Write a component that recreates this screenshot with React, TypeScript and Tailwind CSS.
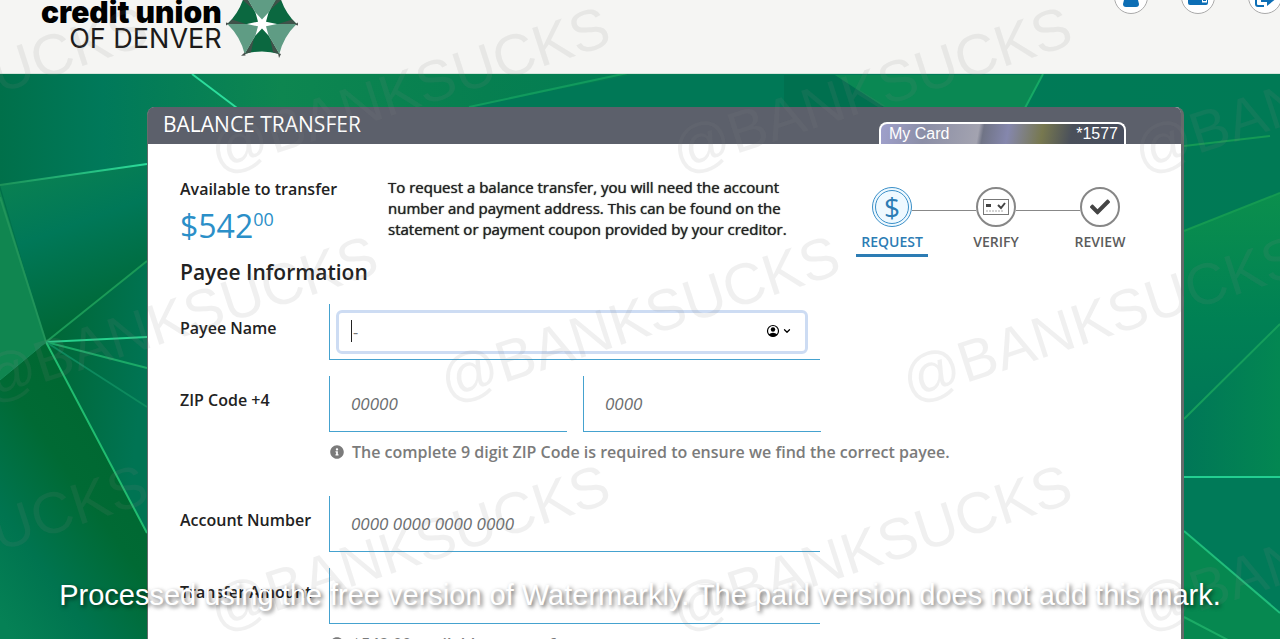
import type { ReactNode } from 'react';
import { ChevronDown } from 'lucide-react';
import { FaCheck, FaInfoCircle } from 'react-icons/fa';

const FIELD = 'h-14 w-full border-b border-l border-[#45a2cf] bg-transparent px-[21px] text-[17px] text-[#333] outline-none placeholder:italic placeholder:text-[#6b6e70]';

const TILE_ROWS = [
  { id: 'top', className: '-ml-[284px]', tiles: 4 },
  { id: 'middle', className: '-ml-[54px]', tiles: 3 },
  { id: 'bottom', className: '-ml-[284px]', tiles: 4 },
];

function Backdrop() {
  return (
    <svg className="absolute inset-0 h-full w-full" viewBox="0 0 1280 639" preserveAspectRatio="xMidYMid slice" aria-hidden="true">
      <defs>
        <linearGradient id="top" x1="0" x2="1">
          <stop offset="0" stopColor="#00704a" />
          <stop offset=".08" stopColor="#00795a" />
          <stop offset=".22" stopColor="#0d8650" />
          <stop offset=".38" stopColor="#067f50" />
          <stop offset=".6" stopColor="#007a58" />
          <stop offset="1" stopColor="#007a55" />
        </linearGradient>
        <linearGradient id="wedge" x1="0" y1="0" x2=".3" y2="1">
          <stop offset="0" stopColor="#0c8350" />
          <stop offset=".45" stopColor="#007858" />
          <stop offset="1" stopColor="#006735" />
        </linearGradient>
        <linearGradient id="fan" x1="0" x2="1" y1="0" y2=".3">
          <stop offset="0" stopColor="#006532" />
          <stop offset="1" stopColor="#007453" />
        </linearGradient>
        <linearGradient id="low" x1=".8" y1="0" x2=".1" y2="1">
          <stop offset="0" stopColor="#00652f" />
          <stop offset=".45" stopColor="#006a34" />
          <stop offset=".75" stopColor="#00744f" />
          <stop offset="1" stopColor="#058155" />
        </linearGradient>
        <linearGradient id="right" x1="0" y1="0" x2="0" y2="1">
          <stop offset="0" stopColor="#0b8f4d" />
          <stop offset=".55" stopColor="#008154" />
          <stop offset="1" stopColor="#007657" />
        </linearGradient>
        <linearGradient id="rightLow" x1="0" y1="0" x2="1" y2="0">
          <stop offset="0" stopColor="#007657" />
          <stop offset="1" stopColor="#038752" />
        </linearGradient>
        <linearGradient id="ray" x1="0" x2="1">
          <stop offset="0" stopColor="#1c9158" />
          <stop offset="1" stopColor="#2cdd9c" />
        </linearGradient>
      </defs>
      <rect width="1280" height="639" fill="url(#top)" />
      <path d="M0 185 147 164V261L46 342Z" fill="url(#wedge)" />
      <path d="M0 190 46 342 0 380Z" fill="#108650" />
      <path d="M46 342 147 260V533Z" fill="url(#fan)" />
      <path d="M0 380 46 342 147 533V639H0Z" fill="url(#low)" />
      <path d="M469 107 632 75H784V107Z" fill="#007856" />
      <path d="M784 75H835L884 107H784Z" fill="#00704f" />
      <path d="M835 75H1043L1025 107H884Z" fill="#0a8853" />
      <path d="M1180 233 1280 193V324L1180 422Z" fill="url(#right)" />
      <path d="M1180 422 1280 324V477H1180Z" fill="url(#rightLow)" />
      <path d="M1180 477H1280V613L1180 528Z" fill="#007a58" />
      <path d="M1180 528 1280 613V639H1180Z" fill="#068850" />
      <g fill="none" strokeWidth="2">
        <path d="M0 185 147 164" stroke="url(#ray)" />
        <path d="M0 197 46 342" stroke="#21945a" />
        <path d="M46 342 147 261" stroke="#1a9a57" />
        <path d="M46 342 147 337" stroke="#27d18d" />
        <path d="M46 342 147 368" stroke="#1aa967" />
        <path d="M46 342 147 407" stroke="#0d8a5e" />
        <path d="M46 342 147 533" stroke="#20bd70" />
        <path d="M46 342 0 380" stroke="#188b59" strokeWidth="1" />
        <path d="M192 74 237 108" stroke="#2cdd9c" />
        <path d="M469 107 632 72" stroke="#119a5d" />
        <path d="M1043 74 1025 108" stroke="#16a965" />
        <path d="M1184 146 1270 136" stroke="#149a55" />
        <path d="M1184 231 1280 193" stroke="#149a52" />
        <path d="M1184 419 1280 324" stroke="#159e5c" />
        <path d="M1184 477H1280" stroke="#23cf91" />
        <path d="M1184 531 1280 613" stroke="#20bd7b" />
        <path d="M1184 617 1228 640" stroke="#1cab66" />
      </g>
    </svg>
  );
}

function Umbrella() {
  return (
    <svg className="h-[72px] w-[72px]" viewBox="-36 -36 72 72" aria-hidden="true">
      {[0, 60, 120, 180, 240, 300].map((deg, i) => (
        <g key={deg} transform={`rotate(${deg})`}>
          <path d="M0 0 17.300 30Q0 25-17.300 30Z" fill={i % 2 === 0 ? '#0b6840' : '#5f9c84'} />
          {i % 2 === 0 && <path d="M8 14 17.300 30 11 28.300ZM-8 14-17.300 30-11 28.300Z" fill="#3f5249" />}
          <path d="M16 29 19 30 17 34Z" fill="#4a514d" />
        </g>
      ))}
      <path d="M15 0 4 2.300 6.500 11.500 0 4.600-6.500 11.500-4 2.300-15 0-4-2.300-6.500-11.500 0-4.600 6.500-11.500 4-2.300Z" fill="#fff" />
    </svg>
  );
}

function NavButton({ label, children }: { label: string; children: ReactNode }) {
  return (
    <button aria-label={label} className="flex size-[34px] items-center justify-center rounded-full border border-[#aaa] bg-white text-[#0d6eb5]">
      {children}
    </button>
  );
}

function Header() {
  return (
    <header className="relative flex h-[74px] items-start justify-between overflow-hidden border-b border-[#d5e5dc] bg-[#f5f5f3] pl-[41px]">
      <div className="-mt-3 flex gap-1">
        <div className="pt-[9px] text-right font-['Inter',sans-serif] text-black">
          <div className="text-[30px] leading-[30px] font-black">credit union</div>
          <div className="text-[27px] leading-6 text-[#1c1a1a]">OF DENVER</div>
        </div>
        <Umbrella />
      </div>
      <nav className="-mt-5 -mr-0.5 flex gap-[33px]">
        <NavButton label="Profile">
          <svg viewBox="0 0 20 20" className="size-5" fill="currentColor">
            <circle cx="10" cy="4" r="4" />
            <path d="M4 9h12l2 8q0 3-3 3H5q-3 0-3-3Z" />
          </svg>
        </NavButton>
        <NavButton label="Cards">
          <svg viewBox="0 0 20 20" className="size-5" fill="currentColor">
            <path d="M2 2h13v3h5v11q0 2-2 2H2q-2 0-2-2V4q0-2 2-2Z" />
            <path d="M14 11.500h5v4h-5Z" fill="#fff" />
            <path d="M15 13h3v1h-3Z" />
          </svg>
        </NavButton>
        <NavButton label="Log out">
          <svg viewBox="0 0 20 20" className="size-5" fill="currentColor">
            <path d="M9 2H3Q1 2 1 4V17q0 2 2 2H9" fill="none" stroke="currentColor" strokeWidth="2" />
            <path d="M6 10h6V6l8 6.500-8 6.500V15H6Z" />
          </svg>
        </NavButton>
      </nav>
    </header>
  );
}

function Step({ label, active, children }: { label: string; active?: boolean; children: ReactNode }) {
  return (
    <li className={active ? 'flex w-[72px] flex-col items-center text-[#2c7cb4]' : 'flex w-[72px] flex-col items-center text-[#5c5c5c]'}>
      <div className={active
        ? 'flex size-10 items-center justify-center rounded-full border-4 border-double border-[#3a8fc8] bg-[#eff9ff]'
        : 'flex size-10 items-center justify-center rounded-full border-2 border-[#878787] bg-white'}
      >
        {children}
      </div>
      <div className={active
        ? 'mt-[5px] w-full border-b-[3px] border-[#2c7cb4] pb-0.5 text-center text-sm font-semibold'
        : 'mt-[5px] w-full text-center text-sm font-semibold'}
      >
        {label}
      </div>
    </li>
  );
}

function Steps() {
  return (
    <ol className="mt-[43px] mr-[45px] ml-auto flex items-start">
      <Step label="REQUEST" active>
        <span className="text-[28px] leading-8">$</span>
      </Step>
      <li aria-hidden="true" className="-mx-4 mt-[23px] h-px w-16 bg-[#888]" />
      <Step label="VERIFY">
        <svg viewBox="0 0 26 16" className="h-4 w-[26px]" aria-hidden="true">
          <rect x=".5" y=".5" width="25" height="15" fill="#fff" stroke="#777" />
          <path d="M3 5h5v3H3Z" fill="#444" />
          <path d="m15 6 3 3 4-5" fill="none" stroke="#444" strokeWidth="2" />
          <path d="M3 12h17" stroke="#aaa" strokeDasharray="2 1" />
        </svg>
      </Step>
      <li aria-hidden="true" className="-mx-4 mt-[23px] h-px w-16 bg-[#888]" />
      <Step label="REVIEW">
        <FaCheck className="size-5 text-[#444]" />
      </Step>
    </ol>
  );
}

function Row({ label, id, children }: { label: string; id: string; children: ReactNode }) {
  return (
    <div className="flex">
      <label htmlFor={id} className="w-[149px] shrink-0 pt-3 text-base font-semibold">{label}</label>
      {children}
    </div>
  );
}

function Hint({ children }: { children: ReactNode }) {
  return (
    <p className="-mt-2 mb-8 ml-[150px] flex items-center gap-2 text-base font-semibold text-[#7b7b7b]">
      <FaInfoCircle className="size-3.5" />
      {children}
    </p>
  );
}

function Watermarks() {
  return (
    <div className="pointer-events-none absolute inset-0 overflow-hidden font-['Liberation_Sans',sans-serif]" aria-hidden="true">
      <div className="-mt-[26px]">
        {TILE_ROWS.map(row => (
          <div key={row.id} className={`flex h-[229px] items-center ${row.className}`}>
            {Array.from({ length: row.tiles }, (_, i) => (
              <div key={i} className="flex w-[462px] shrink-0 justify-center">
                <span className="-rotate-[18deg] text-[58px] leading-none text-[#808080]/12">@BANKSUCKS</span>
              </div>
            ))}
          </div>
        ))}
      </div>
      <p className="absolute inset-x-0 bottom-6 text-center text-[29px] leading-10 whitespace-nowrap text-white [text-shadow:2px_2px_4px_rgba(0,0,0,.6)]">
        Processed using the free version of Watermarkly. The paid version does not add this mark.
      </p>
    </div>
  );
}

export default function App() {
  return (
    <div className="relative h-screen overflow-hidden bg-[#007a58] font-['Open_Sans',sans-serif] text-[#222]">
      <Backdrop />
      <Header />

      <main className="relative mt-[33px] mr-24 ml-[147px] min-h-screen rounded-t-lg border-r-[3px] border-l border-[#666b6b] bg-white">
        <div className="flex h-[37px] justify-between rounded-t-md bg-[#5c606b] pr-[55px] pl-[15px] text-white">
          <h1 className="text-[21px] leading-[34px]">BALANCE TRANSFER</h1>
          <div className="mt-[15px] flex h-[22px] w-[247px] justify-between overflow-hidden rounded-t-lg border-2 border-b-0 border-white bg-[linear-gradient(100deg,#9fa0cc_0%,#8b8ea6_18%,#a3a3b0_40%,#707486_42%,#8587ad_52%,#77784f_66%,#4a505b_78%,#484e5e_100%)] pr-1.5 pl-2 font-['Liberation_Sans',sans-serif] text-base leading-5">
            <span>My Card</span>
            <span>*1577</span>
          </div>
        </div>

        <div className="px-8">
          <section className="-mr-8 flex">
            <div className="w-52 pt-[33px]">
              <div className="text-base font-semibold">Available to transfer</div>
              <div className="flex text-[#2b8fc8]">
                <span className="text-[32px] leading-[50px]">$542</span>
                <sup className="top-0 pt-1 text-lg">00</sup>
              </div>
            </div>
            <p className="pt-[33px] text-[15px] leading-[21px] [text-shadow:0_0_1px_#222]">
              To request a balance transfer, you will need the account<br />
              number and payment address. This can be found on the<br />
              statement or payment coupon provided by your creditor.
            </p>
            <Steps />
          </section>

          <h2 className="text-[21px] leading-[31px] font-semibold">Payee Information</h2>

          <form className="mt-4 flex flex-col gap-4">
            <Row label="Payee Name" id="payee">
              <div className="relative h-14 w-[491px] border-b border-l border-[#45a2cf] pt-[6px] pr-3 pb-[5px] pl-1.5">
                <input id="payee" placeholder="-" className="h-full w-full rounded-md border-[3px] border-[#cddcf3] px-3.5 text-base outline-none placeholder:text-[#777]" />
                <span className="absolute top-4 left-[21px] h-[22px] w-px bg-[#222]" />
                <button type="button" aria-label="Autofill contact" className="absolute top-5 right-7 flex items-center gap-0.5 text-black">
                  <svg viewBox="0 0 14 14" className="size-3.5">
                    <circle cx="7" cy="7" r="5.500" fill="none" stroke="currentColor" strokeWidth="1.200" />
                    <circle cx="7" cy="5.500" r="2.200" fill="currentColor" />
                    <path d="M2.500 10.500Q7 7 11.500 10.500 7 15 2.500 10.500Z" fill="currentColor" />
                  </svg>
                  <ChevronDown size={10} strokeWidth={3} />
                </button>
              </div>
            </Row>
            <Row label="ZIP Code +4" id="zip">
              <div className="grid w-[492px] grid-cols-2 gap-4">
                <input id="zip" placeholder="00000" className={FIELD} />
                <input aria-label="ZIP +4" placeholder="0000" className={FIELD} />
              </div>
            </Row>
            <Hint>The complete 9 digit ZIP Code is required to ensure we find the correct payee.</Hint>
            <div className="-mt-4 w-[640px]">
              <Row label="Account Number" id="account">
                <input id="account" placeholder="0000 0000 0000 0000" className={FIELD} />
              </Row>
            </div>
            <div className="w-[640px]">
              <Row label="Transfer Amount" id="amount">
                <input id="amount" className={FIELD} />
              </Row>
            </div>
            <Hint>$542.00 available to transfer</Hint>
          </form>
        </div>
      </main>

      <Watermarks />
    </div>
  );
}
